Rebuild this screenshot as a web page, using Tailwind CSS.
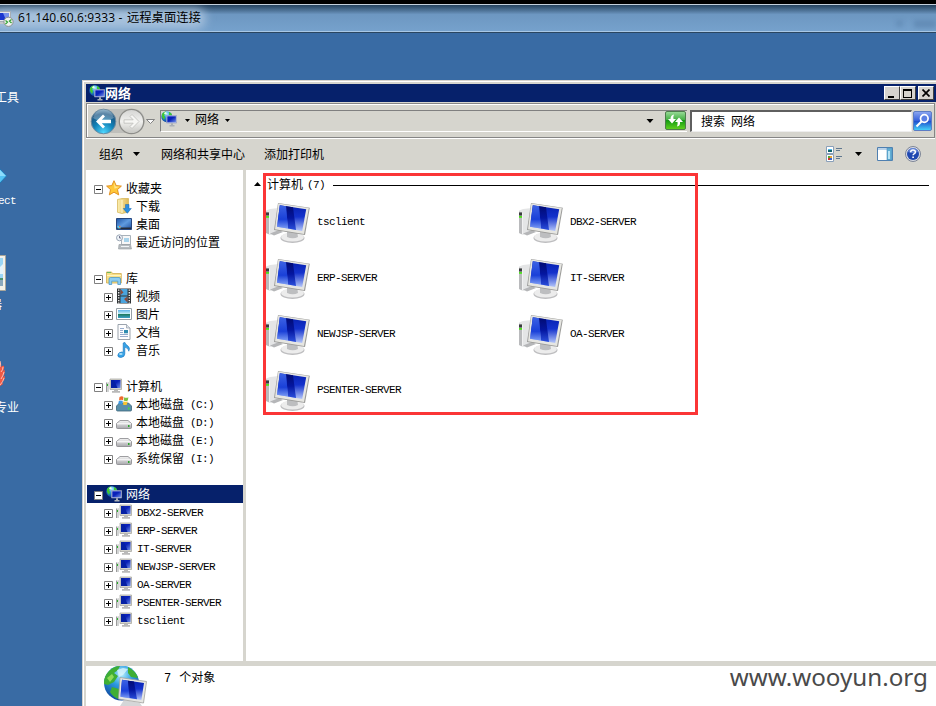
<!DOCTYPE html>
<html lang="zh-CN">
<head>
<meta charset="utf-8">
<title>网络</title>
<script src="https://cdn.jsdelivr.net/npm/@tailwindcss/browser@4"></script>
</head>
<body class="w-[936px] h-[706px] overflow-hidden bg-[#396ba4] font-['Noto_Sans_CJK_SC',sans-serif] text-[12px] leading-[18px] text-black">
<svg width="0" height="0" class="absolute">
  <defs>
    <linearGradient id="scr" x1="0" y1="0" x2="1" y2="1"><stop offset="0" stop-color="#0a1fc0"/><stop offset=".45" stop-color="#0a22b8"/><stop offset="1" stop-color="#6f8fea"/></linearGradient>
    <linearGradient id="scrv" x1="0" y1="0" x2="0" y2="1"><stop offset="0" stop-color="#0620b0"/><stop offset=".45" stop-color="#1432cc"/><stop offset="1" stop-color="#b4c6fa"/></linearGradient>
    <linearGradient id="wedge" x1="0" y1="0" x2="0" y2="1"><stop offset="0" stop-color="#020c74"/><stop offset=".5" stop-color="#0416a0"/><stop offset="1" stop-color="#2c50dc"/></linearGradient>
    <linearGradient id="shine" x1="0" y1="0" x2="0" y2="1"><stop offset="0" stop-color="#3c62e4"/><stop offset=".6" stop-color="#1a40d8"/><stop offset="1" stop-color="#7c9cf4"/></linearGradient>
    <linearGradient id="fold" x1="0" y1="0" x2="1" y2="0"><stop offset="0" stop-color="#fbeeb0"/><stop offset="1" stop-color="#dfb955"/></linearGradient>
    <linearGradient id="sky" x1="0" y1="0" x2="0" y2="1"><stop offset="0" stop-color="#5fb4ea"/><stop offset=".5" stop-color="#c9f0f4"/><stop offset=".55" stop-color="#1f7c62"/><stop offset="1" stop-color="#3ba0c9"/></linearGradient>
    <linearGradient id="desk" x1="0" y1="0" x2="1" y2="1"><stop offset="0" stop-color="#1c52a4"/><stop offset=".5" stop-color="#5f9be0"/><stop offset="1" stop-color="#1c4c9c"/></linearGradient>
    <linearGradient id="drv" x1="0" y1="0" x2="0" y2="1"><stop offset="0" stop-color="#f4f4f4"/><stop offset="1" stop-color="#a9a9ad"/></linearGradient>
    <radialGradient id="earth" cx=".5" cy=".25" r=".8"><stop offset="0" stop-color="#b5f0ff"/><stop offset=".4" stop-color="#2d9be0"/><stop offset="1" stop-color="#0b3f98"/></radialGradient>
    <radialGradient id="back" cx=".5" cy=".95" r=".95"><stop offset="0" stop-color="#4fd8ff"/><stop offset=".45" stop-color="#1182b8"/><stop offset=".8" stop-color="#1b5582"/><stop offset="1" stop-color="#6f9dbb"/></radialGradient>
    <linearGradient id="fwd" x1="0" y1="0" x2="0" y2="1"><stop offset="0" stop-color="#d4d4d2"/><stop offset=".5" stop-color="#f0f0ee"/><stop offset="1" stop-color="#c4c4c0"/></linearGradient>
    <linearGradient id="go" x1="0" y1="0" x2="0" y2="1"><stop offset="0" stop-color="#9bdc9b"/><stop offset=".48" stop-color="#3fae3f"/><stop offset=".5" stop-color="#149a14"/><stop offset="1" stop-color="#62d41f"/></linearGradient>
    <linearGradient id="find" x1="0" y1="0" x2="0" y2="1"><stop offset="0" stop-color="#8ea8f0"/><stop offset=".48" stop-color="#3560dc"/><stop offset=".5" stop-color="#1d4ccc"/><stop offset="1" stop-color="#46d6fa"/></linearGradient>

    <symbol id="plus" viewBox="0 0 9 9"><path d="M.5 .5h8v8h-8z" fill="#fff" stroke="#808080"/><path d="M2 4.500h5M4.500 2v5" stroke="#000"/></symbol>
    <symbol id="minus" viewBox="0 0 9 9"><path d="M.5 .5h8v8h-8z" fill="#fff" stroke="#808080"/><path d="M2 4.500h5" stroke="#000"/></symbol>
    <symbol id="down" viewBox="0 0 7 4"><path d="M0 0h7L3.500 4z"/></symbol>

    <symbol id="pc" viewBox="0 0 44 40">
      <path d="M0 7.500l4-1.500 9-1v24l-9 3-4-2z" fill="#e4e5e6"/>
      <path d="M0 8.500l3.500 1v22L0 30z" fill="#b9babc"/><path d="M3.500 9.500v22" stroke="#fafafa" stroke-width=".8"/>
      <path d="M0 9.500h3v3H0z" fill="#3a3c3e"/><path d="M0 13h3v1.800H0z" fill="#4be01c"/>
      <path d="M4 30.500l9-3.500 4 2-9 3.500z" fill="#b5b6b8"/>
      <ellipse cx="26.500" cy="35" rx="12" ry="5" fill="#bdbdbf"/><ellipse cx="26.500" cy="34" rx="11.500" ry="4.500" fill="#ececec"/>
      <path d="M21 28h10l1 6q-5 2.500-11 0z" fill="#bdbec0"/>
      <path d="M12 0L43.800 4.800 39 32 8 27z" fill="#9b9b99"/>
      <path d="M12.300 .5L42.800 5 38 31 9 26.200z" fill="#e6e6e2"/>
      <path d="M13.800 2.300L40.200 6.200 36.200 28 11 23.800z" fill="url(#scrv)"/>
      <path d="M20 3.200l7 1 3 22.800-8-1.400z" fill="url(#wedge)"/>
      <path d="M13.800 2.300l6.200.9 2 22.400-11-1.800z" fill="url(#shine)"/>
    </symbol>
    <symbol id="pcs" viewBox="0 0 16 16">
      <path d="M0 5l3-1v10H0z" fill="#d2d4d4"/><path d="M.5 4.500v9.500" stroke="#9b9b9b"/><path d="M1 6h1v2H1z" fill="#28b428"/>
      <path d="M4 1h11.500v10.500H4z" fill="#d5d4cc" stroke="#aaa9a3" stroke-width=".8"/><path d="M5 2h9.500v8H5z" fill="url(#scr)"/><path d="M5 2h3l3.500 8H5z" fill="#0620a4"/>
      <path d="M8 11.500h4v1.500h2v1.700H6V13h2z" fill="#b9b9b9"/>
    </symbol>
    <symbol id="net" viewBox="0 0 16 16">
      <circle cx="5.800" cy="5.700" r="5.500" fill="url(#earth)"/>
      <path d="M1 3q2-3 4-2.500L5 3 3 4l1 2-1 3-2-3zM8 .7l3 2.300-1 2-2-1z" fill="#41c832"/><path d="M4 .8L6 2 4.500 3.500 3 3z" fill="#e9fff0"/>
      <path d="M5.500 4.500h10.200v7.500H5.500z" fill="#c6cce8" stroke="#8d99b8" stroke-width=".6"/><path d="M6.300 5.300h8.600v6H6.300z" fill="url(#scr)"/>
      <path d="M10 12.300h2v1.700h1.500v1.500h-5V14H10z" fill="#aab0b6"/>
    </symbol>
    <symbol id="star" viewBox="0 0 16 16"><path d="M8 .7l2.200 4.900 5.200.5-3.900 3.500 1.200 5.300L8 12.200l-4.700 2.700 1.200-5.300L.6 6.100l5.200-.5z" fill="#ffc83a" stroke="#e08a1a" stroke-width=".9"/><path d="M8 2.500l1.500 4 4 .3-5 2z" fill="#ffe690"/></symbol>
    <symbol id="dl" viewBox="0 0 16 16"><path d="M1.500 1.500L6 .5h6.500V14L6 15.500l-4.500-1.200z" fill="url(#fold)" stroke="#d3b04e" stroke-width=".7"/><path d="M6 2v13" stroke="#fff6cf"/><path d="M9.500 6.500h3.500v4h2.300l-4 4.800-4-4.800h2.200z" fill="#2a8ee0" stroke="#1565b4" stroke-width=".5"/></symbol>
    <symbol id="desktop" viewBox="0 0 16 16"><path d="M.5 2.500h15v11H.5z" fill="url(#desk)" stroke="#27477e"/><path d="M1 11.500h14V13H1z" fill="#252c3a"/><path d="M1.500 10h3v2.500h-3z" fill="#58c8ee"/><path d="M3 10h1.500v1.200H3z" fill="#f2703c"/></symbol>
    <symbol id="recent" viewBox="0 0 16 16"><path d="M5.500 1.500h9v9h-9z" fill="#f7f7f7" stroke="#a9b2ba"/><path d="M8 4h5v4H8z" fill="#a8d4ec"/><path d="M3 10.500h11.500l1 4.500h-13z" fill="#b7bcc0" stroke="#949a9f" stroke-width=".6"/><path d="M5 12h8v1H5z" fill="#f0f4f6"/><circle cx="3.500" cy="3.800" r="3" fill="#eef3f8" stroke="#9aa6b4"/><path d="M3.500 2v2H5" stroke="#446" fill="none" stroke-width=".7"/></symbol>
    <symbol id="lib" viewBox="0 0 16 16"><path d="M.5 2h5l1 1.500h8.800V13H.5z" fill="#f6df86" stroke="#d2ab4e" stroke-width=".8"/><path d="M1 2.500h4" stroke="#6cb85c"/><path d="M1 5h14v1H1z" fill="#fff4bf"/><path d="M3 14.500V9q0-1.500 1.500-1.500h8.500q1.500 0 1.500 1.500v5.500h-2.700v-3.300H5.700v3.300z" fill="#8bcdf2" stroke="#3f8fc8" stroke-width=".7"/></symbol>
    <symbol id="video" viewBox="0 0 16 16"><path d="M1 .5h14v15H1z" fill="#303436"/><path d="M4.500 1h7v6.500h-7zM4.500 8.500h7V15h-7z" fill="#4aa4de"/><path d="M4.500 1l3 3.500-3 2.500zM11.500 8.500v6L8 11z" fill="#8b4a3c"/><path d="M2.700 1.500v14M13.300 1.500v14" stroke="#eee" stroke-width="1.400" stroke-dasharray="1.300 1.300"/></symbol>
    <symbol id="pic" viewBox="0 0 16 16"><path d="M.5 2.500h15v11H.5z" fill="#fff" stroke="#96a0a6"/><path d="M2 4h12v8H2z" fill="url(#sky)"/></symbol>
    <symbol id="doc" viewBox="0 0 16 16"><path d="M2 .5h8.500L14 4v11.500H2z" fill="#fdfdfe" stroke="#9099a4" stroke-width=".9"/><path d="M10.500 .5V4H14" fill="#dde4ec" stroke="#9099a4" stroke-width=".7"/><path d="M4 4.500h4M4 6.500h3M4 8.500h3M4 10.500h8M4 12.500h8" stroke="#8ba3c8" stroke-width=".9"/><path d="M8 6h4v3.300H8z" fill="#2d8bb0"/></symbol>
    <symbol id="music" viewBox="0 0 16 16"><path d="M7.200 1l1.600-.7q.5 2.200 3.200 3.700 2.500 2 .8 5.200.2-2.700-4-4.200V12q-.2 3-3.700 3.500-3.300.2-3.300-2.200.4-3 3.800-3.300l1.600.2z" fill="#38a4e6" stroke="#1672bd" stroke-width=".6"/><ellipse cx="4.800" cy="12" rx="1.800" ry="1" fill="#a9def9"/></symbol>
    <symbol id="hd" viewBox="0 0 16 16"><path d="M4 6.500h8L15.500 9.500v4q0 1-1 1h-13q-1 0-1-1v-4z" fill="url(#drv)" stroke="#87878a" stroke-width=".8"/><path d="M1 9.800h14" stroke="#fff"/><path d="M12 11h1.500v2H12z" fill="#2ca82c"/></symbol>
    <symbol id="hdc" viewBox="0 0 16 16"><path d="M3.500 7h9l3 3v4q0 1-1 1h-13q-1 0-1-1v-4z" fill="#5a8faa" stroke="#3e6478" stroke-width=".8"/><path d="M12 11.500h1.500v2H12z" fill="#41e041"/><path d="M3.500 1q2.500-1.500 4 0L7 4.300q-2-1-4 .2z" fill="#ee6a2c"/><path d="M8.200 1.200q2 1.200 4.200 0L11.800 4.500q-2 1-4 0z" fill="#7cc043"/><path d="M2.800 5q2-1.200 4 0l-.6 3.200q-2-1-4 0z" fill="#3e9be6"/><path d="M7.500 5.300q2 1 4 0L11 8.500q-2 1-4 0z" fill="#fcc52f"/></symbol>
  </defs>
</svg>

<div class="flex h-[706px] w-[936px] flex-col">
  <!-- Remote desktop title bar -->
  <header class="h-[33px] shrink-0 bg-black pt-[4px]">
    <div class="relative flex h-[29px] items-center overflow-hidden border-t border-b border-t-[#c3d0dc] border-b-[#2a4661] bg-linear-to-b from-[#25435f] via-[#6d97c1] via-35% to-[#76a2cd]">
      <div class="absolute bottom-0 left-0 h-px w-full bg-[#a9c8e6]"></div>
      <div class="absolute top-[3px] left-[-10px] h-[21px] w-[216px] rounded-full bg-[#b4cbe2]/80 blur-[5px]"></div>
      <div class="absolute right-[33px] bottom-[5px] h-[7px] w-[7px] bg-[#557ea8]/40 blur-[2px]"></div>
      <div class="absolute right-0 bottom-[4px] h-[8px] w-[22px] bg-[#557ea8]/50 blur-[2px]"></div>
      <svg class="relative h-[18px] w-[14px] shrink-0" viewBox="0 0 14 18"><path d="M-3 1.500h13.500v10H-3z" fill="#e5e7ea" stroke="#a6adb5"/><path d="M-2 3h11v7H-2z" fill="#1b36cf"/><path d="M3 3h6v7H6z" fill="#7790ec"/><path d="M0 12h5v2H0z" fill="#c1c5ca"/><circle cx="8.500" cy="11.800" r="4.600" fill="#f0f2f0" stroke="#8b8f92"/><path d="M5.500 10.500l2 1.500-2 2M11.500 9.500l-2 1.500 2 2" fill="none" stroke="#2aa02a" stroke-width="1.200"/></svg>
      <div class="relative ml-[4px] pb-[3px] whitespace-nowrap"><span class="inline-block w-[109px] font-['Open_Sans',sans-serif] text-[12px] tracking-[0.150px]">61.140.60.6:9333 - </span><span class="text-[12.300px]">远程桌面连接</span></div>
    </div>
  </header>

  <div class="flex min-h-0 flex-1">
    <!-- Desktop icons -->
    <aside class="w-[82px] shrink-0 overflow-hidden text-white">
      <div class="-ml-[5px] mt-[55px] h-[18px]">工具</div>
      <svg class="mt-[61px] block h-[18px] w-[8px]" viewBox="0 0 8 18"><path d="M-8 9L-1 1l7.500 8-7.500 8z" fill="#55c3f4" stroke="#1e76b4"/><path d="M-1 2v7h7z" fill="#8adcfc"/></svg>
      <div class="mt-[7px] -ml-[2px] h-[18px] font-['Liberation_Mono',monospace] text-[11px] tracking-[-0.600px]">ect</div>
      <svg class="mt-[45px] block h-[36px] w-[6px]" viewBox="0 0 6 36"><path d="M0 .5h5.500v35H0" fill="#f3f1ea" stroke="#aaa69a"/><path d="M0 3h3v20H0z" fill="#9cd6f5"/><path d="M0 12l3-3v10H0z" fill="#e6f5fc"/><path d="M0 23h3v2H0z" fill="#4c9472"/><path d="M0 25h3v6H0z" fill="#8aa8be"/></svg>
      <div class="mt-[4px] -ml-[10px] h-[18px]">器</div>
      <svg class="mt-[47px] block h-[28px] w-[6px]" viewBox="0 0 6 28"><path d="M-1 0q3 3 2 7 2-2 3-1 .5 3-1 5l2-1q0 4-2 7l2-1q0 4-3 6l1 2-4 3z" fill="#f05844"/><path d="M0 1q1 3 0 6M1 12q2-2 2-5M1 19q2-3 3-7M0 25q3-3 4-7" fill="none" stroke="#ffc9bd" stroke-width=".9"/></svg>
      <div class="mt-[10px] -ml-[5px] h-[18px]">专业</div>
    </aside>

    <!-- Explorer window -->
    <main class="mt-[47px] flex min-w-0 flex-1 flex-col border-t border-l border-[#d6d3ce] bg-[#d6d5ce]">
      <div class="flex min-h-0 flex-1 flex-col border-t border-l border-white pt-[2px] pl-[2px]">
        <div class="flex h-[18px] shrink-0 items-center bg-[#06216b] pl-[3px] text-white">
          <svg class="size-[16px]"><use href="#net"/></svg>
          <span class="mb-px text-[13px] font-bold">网络</span>
          <div class="ml-auto flex pr-[2px]">
            <div class="h-[14px] w-[16px] border border-t-white border-r-[#404040] border-b-[#404040] border-l-white bg-[#d6d3ce] pt-[9px] pl-[3px]"><div class="h-[2px] w-[6px] bg-black"></div></div>
            <div class="h-[14px] w-[16px] border border-t-white border-r-[#404040] border-b-[#404040] border-l-white bg-[#d6d3ce] pt-[2px] pl-[2px]"><div class="h-[9px] w-[9px] border border-t-2 border-black"></div></div>
            <div class="ml-[2px] h-[14px] w-[16px] border border-t-white border-r-[#404040] border-b-[#404040] border-l-white bg-[#d6d3ce]"><svg class="mt-[2px] ml-[3px] h-[8px] w-[8px]" viewBox="0 0 8 8"><path d="M.5 .5l7 7M7.500 .5l-7 7" stroke="#000" stroke-width="1.700"/></svg></div>
          </div>
        </div>

        <!-- Navigation bar -->
        <div class="mt-px mr-px flex h-[35px] shrink-0 items-center border border-[#858585] shadow-[inset_1px_1px_0_#fff,0_1px_0_#fff]">
          <svg class="mt-px ml-[3px] h-[29px] w-[66px] shrink-0" viewBox="0 0 66 29"><path d="M13 2h30q10 0 12 12-2 12-12 12H13z" fill="#bfbfbb"/>
            <circle cx="13.500" cy="14.500" r="12.300" fill="url(#back)" stroke="#6d8ba0"/><path d="M3 11q2-8 10.500-8.500Q22 3 24 11q-5 3-10.500 3Q7 14 3 11z" fill="#fff" opacity=".28"/><path d="M13 7.500l-7 7 7 7 2-2-3.200-3.300H21v-3.400h-9.200L15 9.500z" fill="#fff"/>
            <circle cx="41.500" cy="14.500" r="12.200" fill="url(#fwd)" stroke="#8d8d89" stroke-width="1.300"/><path d="M42 7.500l7 7-7 7-2-2 3.200-3.300H34v-3.400h9.200L40 9.500z" fill="#f6f6f4" stroke="#bdbdb9" stroke-width=".8"/>
            <path d="M56.500 12.500h8l-4 4z" fill="#fafafa" stroke="#777" stroke-width=".9"/></svg>
          <div class="ml-[4px] flex h-[22px] w-[527px] items-center border-t border-l border-[#808080] border-b border-b-white">
            <svg class="mb-[3px] size-[16px]"><use href="#net"/></svg>
            <svg class="ml-[8px] h-[3px] w-[5px]"><use href="#down"/></svg>
            <span class="mb-[4px] ml-[5px]">网络</span>
            <svg class="ml-[6px] h-[3px] w-[5px]"><use href="#down"/></svg>
            <svg class="mr-[11px] ml-auto h-[4px] w-[8px]"><use href="#down"/></svg>
            <svg class="mr-[1px] h-[19px] w-[21px]" viewBox="0 0 21 19"><rect x=".5" y=".5" width="20" height="18" rx="1.500" fill="url(#go)" stroke="#4d7c4d"/><path d="M9 3.500Q5.500 4 5.500 8H3l4 4.500L11 8H8.500Q8 5.500 9 3.500zM12 15.500q3.500-.5 3-4.500h3L14 6.500 10 11h2.500q.5 2.500-.5 4.500z" fill="#fff"/></svg>
          </div>
          <div class="ml-[3px] flex h-[22px] w-[222px] items-center border-t-2 border-l-2 border-[#5f5f5f] border-r border-b border-r-[#eee] border-b-[#eee] bg-white pl-[9px]"><span>搜索</span><span class="ml-[6px]">网络</span></div>
          <svg class="ml-[1px] h-[20px] w-[19px] shrink-0" viewBox="0 0 19 20"><rect x=".5" y=".5" width="18" height="19" rx="1.500" fill="url(#find)" stroke="#5c7cc4"/><circle cx="11.300" cy="7.500" r="3.800" fill="#5c80e4" stroke="#fff" stroke-width="1.700"/><path d="M8.500 10.500l-5 5" stroke="#fff" stroke-width="2.200"/></svg>
        </div>

        <!-- Command bar -->
        <div class="flex h-[32px] shrink-0 items-center pl-[13px]">
          <span>组织</span><svg class="ml-[10px] h-[4px] w-[7px]"><use href="#down"/></svg>
          <span class="ml-[21px]">网络和共享中心</span><span class="ml-[19px]">添加打印机</span>
          <svg class="ml-auto h-[16px] w-[17px]" viewBox="0 0 17 16"><path d="M.5 .5h7v7h-7zM.5 8.500h7v7h-7z" fill="#fff" stroke="#8aa0ba"/><path d="M2 3h4v1H2z" fill="#58bce8"/><path d="M2 4h4v2H2z" fill="#0f6470"/><path d="M2 10h2v2H2z" fill="#5aa42c"/><path d="M4 10h2v2H4z" fill="#e8a53a"/><path d="M2 12h2v2H2z" fill="#cc3030"/><path d="M4 12h2v2H4z" fill="#3a64cc"/><path d="M10 2.500h6M10 4.500h4M10 10.500h6M10 12.500h4" stroke="#607890"/></svg>
          <svg class="ml-[12px] h-[4px] w-[7px]"><use href="#down"/></svg>
          <svg class="ml-[15px] h-[14px] w-[16px]" viewBox="0 0 16 14"><path d="M.5 .5h15v13H.5z" fill="#fff" stroke="#4f7fb0"/><path d="M1 1h14v2H1z" fill="#b9d2ea"/><path d="M10 1h5v12h-5z" fill="#62aed4" stroke="#4f8fb8" stroke-width=".6"/><path d="M11 4h2v8h-2z" fill="#b9e4f4"/></svg>
          <svg class="mr-[15px] ml-[12px] size-[16px]" viewBox="0 0 16 16"><circle cx="8" cy="8" r="7.500" fill="#dadde6" stroke="#7d8596"/><circle cx="8" cy="8" r="6" fill="#2048b0"/><path d="M3 6q1-4 5-4t5 4q-5 2-10 0z" fill="#7d9be4" opacity=".7"/><path d="M5.700 6.200q0-2.200 2.300-2.200t2.400 1.900q0 1.100-1.400 1.900-.9.500-.9 1.500" fill="none" stroke="#fff" stroke-width="1.500"/><path d="M7.300 10.500h1.600V12H7.300z" fill="#fff"/></svg>
        </div>

        <div class="flex h-[491px] shrink-0">
          <!-- Tree -->
          <nav class="flex w-[157px] shrink-0 flex-col bg-white pt-[9px] pl-px whitespace-nowrap [&>div]:flex [&>div]:h-[18px] [&>div]:shrink-0 [&>div]:items-center [&_svg]:size-[16px] [&_svg]:shrink-0 [&_svg:first-child]:size-[9px] [&_svg:first-child]:mt-[2px] [&_svg:first-child]:mr-[3px] [&_i]:mt-[2px] [&_i]:font-['Liberation_Mono',monospace] [&_i]:not-italic [&_i]:text-[11px] [&_i]:tracking-[-0.600px]">
            <div class="pl-[7px]"><svg><use href="#minus"/></svg><svg><use href="#star"/></svg><span class="ml-[4px]">收藏夹</span></div>
            <div class="pl-[17px]"><b class="w-[12px]"></b><svg><use href="#dl"/></svg><span class="ml-[4px]">下载</span></div>
            <div class="pl-[17px]"><b class="w-[12px]"></b><svg><use href="#desktop"/></svg><span class="ml-[4px]">桌面</span></div>
            <div class="pl-[17px]"><b class="w-[12px]"></b><svg><use href="#recent"/></svg><span class="ml-[4px]">最近访问的位置</span></div>
            <div class="mt-[18px] pl-[7px]"><svg><use href="#minus"/></svg><svg><use href="#lib"/></svg><span class="ml-[4px]">库</span></div>
            <div class="pl-[17px]"><svg><use href="#plus"/></svg><svg><use href="#video"/></svg><span class="ml-[4px]">视频</span></div>
            <div class="pl-[17px]"><svg><use href="#plus"/></svg><svg><use href="#pic"/></svg><span class="ml-[4px]">图片</span></div>
            <div class="pl-[17px]"><svg><use href="#plus"/></svg><svg><use href="#doc"/></svg><span class="ml-[4px]">文档</span></div>
            <div class="pl-[17px]"><svg><use href="#plus"/></svg><svg><use href="#music"/></svg><span class="ml-[4px]">音乐</span></div>
            <div class="mt-[18px] pl-[7px]"><svg><use href="#minus"/></svg><svg><use href="#pcs"/></svg><span class="ml-[4px]">计算机</span></div>
            <div class="pl-[17px]"><svg><use href="#plus"/></svg><svg><use href="#hdc"/></svg><span class="ml-[4px]">本地磁盘</span><i class="ml-[6px]">(C:)</i></div>
            <div class="pl-[17px]"><svg><use href="#plus"/></svg><svg><use href="#hd"/></svg><span class="ml-[4px]">本地磁盘</span><i class="ml-[6px]">(D:)</i></div>
            <div class="pl-[17px]"><svg><use href="#plus"/></svg><svg><use href="#hd"/></svg><span class="ml-[4px]">本地磁盘</span><i class="ml-[6px]">(E:)</i></div>
            <div class="pl-[17px]"><svg><use href="#plus"/></svg><svg><use href="#hd"/></svg><span class="ml-[4px]">系统保留</span><i class="ml-[6px]">(I:)</i></div>
            <div class="mt-[18px] bg-[#06216b] pl-[7px] text-white"><svg><use href="#minus"/></svg><svg><use href="#net"/></svg><span class="ml-[4px]">网络</span></div>
            <div class="pl-[17px]"><svg><use href="#plus"/></svg><svg><use href="#pcs"/></svg><i class="ml-[5px]">DBX2-SERVER</i></div>
            <div class="pl-[17px]"><svg><use href="#plus"/></svg><svg><use href="#pcs"/></svg><i class="ml-[5px]">ERP-SERVER</i></div>
            <div class="pl-[17px]"><svg><use href="#plus"/></svg><svg><use href="#pcs"/></svg><i class="ml-[5px]">IT-SERVER</i></div>
            <div class="pl-[17px]"><svg><use href="#plus"/></svg><svg><use href="#pcs"/></svg><i class="ml-[5px]">NEWJSP-SERVER</i></div>
            <div class="pl-[17px]"><svg><use href="#plus"/></svg><svg><use href="#pcs"/></svg><i class="ml-[5px]">OA-SERVER</i></div>
            <div class="pl-[17px]"><svg><use href="#plus"/></svg><svg><use href="#pcs"/></svg><i class="ml-[5px]">PSENTER-SERVER</i></div>
            <div class="pl-[17px]"><svg><use href="#plus"/></svg><svg><use href="#pcs"/></svg><i class="ml-[5px]">tsclient</i></div>
          </nav>

          <!-- File list -->
          <section class="relative ml-[3px] min-w-0 flex-1 bg-white pt-[5px]">
            <div class="flex h-[18px] items-center pl-[8px]">
              <svg class="h-[4px] w-[7px] rotate-180"><use href="#down"/></svg>
              <span class="ml-[6px]">计算机</span><span class="mt-px ml-[4px] font-['Liberation_Mono',monospace] text-[11px] tracking-[-0.600px]">(7)</span>
              <div class="mt-[2px] mr-[7px] ml-[8px] h-px flex-1 bg-black"></div>
            </div>
            <div class="mt-[10px] ml-[20px] grid grid-cols-[253px_253px] auto-rows-[56px] font-['Liberation_Mono',monospace] text-[11px] tracking-[-0.600px] [&>div]:flex [&_span]:mt-[10px] [&_span]:ml-[7px] [&_svg]:h-[40px] [&_svg]:w-[44px]">
              <div><svg><use href="#pc"/></svg><span>tsclient</span></div>
              <div><svg><use href="#pc"/></svg><span>DBX2-SERVER</span></div>
              <div><svg><use href="#pc"/></svg><span>ERP-SERVER</span></div>
              <div><svg><use href="#pc"/></svg><span>IT-SERVER</span></div>
              <div><svg><use href="#pc"/></svg><span>NEWJSP-SERVER</span></div>
              <div><svg><use href="#pc"/></svg><span>OA-SERVER</span></div>
              <div><svg><use href="#pc"/></svg><span>PSENTER-SERVER</span></div>
            </div>
            <div class="absolute top-[3px] left-[17px] h-[242px] w-[435px] border-[3px] border-[#fb3536]"></div>
          </section>
        </div>

        <!-- Details pane -->
        <footer class="mt-[5px] flex min-h-0 flex-1 overflow-hidden bg-white pl-[18px]">
          <svg class="h-[40px] w-[44px] shrink-0" viewBox="0 0 44 40"><circle cx="17.500" cy="17" r="17.500" fill="url(#earth)"/><path d="M5 5q5-5 11-5l-2 4-4 3 4 3-4 6-6 3-4-1Q-.5 11 5 5zM8 21l7 2 3 6-4 4Q9 31 6 26zM24 1q8 4 10 11l-7-1-3-4z" fill="#3fae34"/><path d="M3 12l5-4 2 3-4 5z" fill="#8edb58"/><path d="M13 4l6-2 5 1-5 6-4 2z" fill="#d9f4fb" opacity=".8"/><path d="M20 34l16 3 2 3H16z" fill="#d5d6d8"/><path d="M16 11.500l26.500 4L39.500 37l-25-4z" fill="#e6e6e2" stroke="#a2a29e" stroke-width=".8"/><path d="M18 13.800l22 3.200-2.600 17-21-3.200z" fill="url(#scrv)"/><path d="M18 13.800l6 .9 1.500 17.500-9-1.400z" fill="url(#shine)"/><path d="M24 14.700l6 .8 3 17.800-7.500-1.200z" fill="url(#wedge)"/></svg>
          <div class="mt-[2px] ml-[16px] whitespace-nowrap"><span class="font-['Liberation_Mono',monospace] text-[12px]">7</span><span class="ml-[8px]">个对象</span></div>
          <div class="mt-[-4px] mr-[8px] ml-auto font-['Noto_Sans',sans-serif] text-[24.200px] leading-[30px] text-[#4a4a4a]">www.wooyun.org</div>
        </footer>
      </div>
    </main>
  </div>
</div>
</body>
</html>
